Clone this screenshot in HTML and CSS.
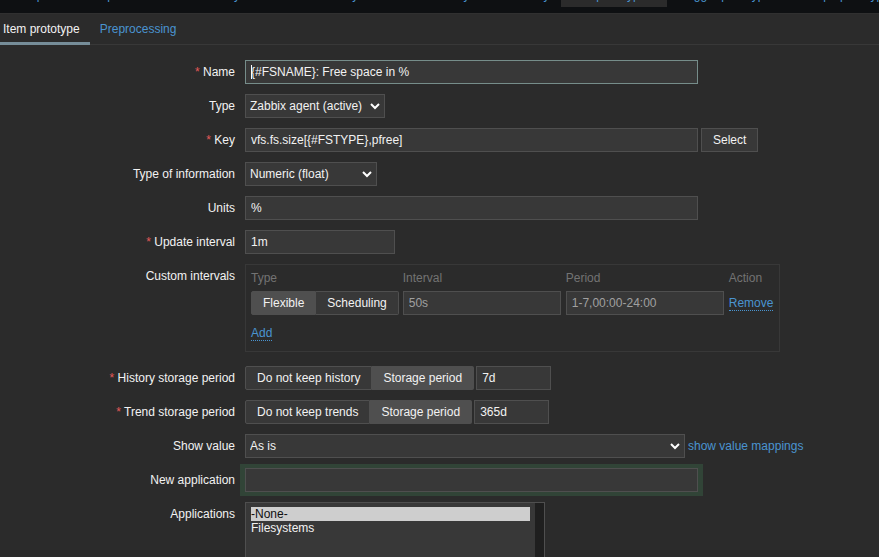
FILE: index.html
```
<!DOCTYPE html>
<html lang="en">
<head>
<meta charset="utf-8">
<title>Item prototype</title>
<link rel="stylesheet" href="styles.css">
</head>
<body>
<nav class="crumbs" aria-label="Discovery rule">
  <a href="#">All templates</a>
  <a href="#">Template Server Windows by Zabbix 4</a>
  <a href="#">Discovery list</a>
  <a href="#">Mounted filesystem discovery</a>
  <a href="#" class="current">Item prototypes 4</a>
  <a href="#">Trigger prototypes 2</a>
  <a href="#">Graph prototypes</a>
</nav>
<main>
  <nav class="tabs" aria-label="Form sections">
    <a href="#" class="tab active">Item prototype</a>
    <a href="#" class="tab">Preprocessing</a>
  </nav>
  <form class="form">
    <label class="label required" for="name">Name</label>
    <div class="field"><input class="wide focused" id="name" type="text" value="{#FSNAME}: Free space in %"><span class="caret"></span></div>

    <label class="label" for="type">Type</label>
    <div class="field"><select id="type" class="type"><option>Zabbix agent (active)</option></select></div>

    <label class="label required" for="key">Key</label>
    <div class="field"><input class="wide" id="key" type="text" value="vfs.fs.size[{#FSTYPE},pfree]"><button type="button" class="button">Select</button></div>

    <label class="label" for="info">Type of information</label>
    <div class="field"><select id="info" class="info"><option>Numeric (float)</option></select></div>

    <label class="label" for="units">Units</label>
    <div class="field"><input class="wide" id="units" type="text" value="%"></div>

    <label class="label required" for="update">Update interval</label>
    <div class="field"><input class="small" id="update" type="text" value="1m"></div>

    <span class="label">Custom intervals</span>
    <div class="field">
      <div class="intervals">
        <table>
          <thead><tr><th>Type</th><th>Interval</th><th>Period</th><th>Action</th></tr></thead>
          <tbody>
            <tr>
              <td><div class="segments">
                <input type="radio" name="kind" id="flexible" checked><label for="flexible">Flexible</label>
                <input type="radio" name="kind" id="scheduling"><label for="scheduling">Scheduling</label>
              </div></td>
              <td><input class="cell" type="text" placeholder="50s" aria-label="Interval"></td>
              <td><input class="cell" type="text" placeholder="1-7,00:00-24:00" aria-label="Period"></td>
              <td><button type="button" class="link">Remove</button></td>
            </tr>
            <tr><td colspan="4"><button type="button" class="link">Add</button></td></tr>
          </tbody>
        </table>
      </div>
    </div>

    <label class="label required" for="history">History storage period</label>
    <div class="field storage">
      <div class="segments">
        <input type="radio" name="hist" id="hist-off"><label for="hist-off">Do not keep history</label>
        <input type="radio" name="hist" id="hist-on" checked><label for="hist-on">Storage period</label>
      </div>
      <input class="tiny" id="history" type="text" value="7d">
    </div>

    <label class="label required" for="trend">Trend storage period</label>
    <div class="field storage">
      <div class="segments">
        <input type="radio" name="trends" id="trend-off"><label for="trend-off">Do not keep trends</label>
        <input type="radio" name="trends" id="trend-on" checked><label for="trend-on">Storage period</label>
      </div>
      <input class="tiny" id="trend" type="text" value="365d">
    </div>

    <label class="label" for="show">Show value</label>
    <div class="field"><select id="show" class="show"><option>As is</option></select><a href="#">show value mappings</a></div>

    <label class="label" for="new-app">New application</label>
    <div class="field"><input class="wide highlighted" id="new-app" type="text"></div>

    <label class="label" for="apps">Applications</label>
    <div class="field"><select id="apps" class="listbox" multiple size="6"><option selected>-None-</option><option>Filesystems</option></select></div>
  </form>
</main>
</body>
</html>
```
FILE: styles.css
```
* { box-sizing: border-box; }
body {
  margin: 0;
  background: #0e1012;
  color: #f2f2f2;
  font: 12px/14px "Liberation Sans", Arial, sans-serif;
}
a { color: #4a94d0; text-decoration: none; }
input, select, button { font: inherit; color: inherit; margin: 0; }

.crumbs {
  display: flex;
  align-items: flex-end;
  gap: 16px;
  height: 7px;
  margin-bottom: 6px;
  white-space: nowrap;
  overflow: hidden;
}
.crumbs a { padding: 5px 0; }
.crumbs .current { padding: 5px 5px 5px 9px; margin: 0 -3px 0 -5px; background: #2b2b2b; }

main { background: #2b2b2b; border-top: 1px solid #303030; min-height: 100vh; }
.tabs { display: flex; border-bottom: 1px solid #383838; height: 31px; }
.tab { padding: 8px 10px 6px; height: 31px; }
.tab.active {
  padding-left: 3px;
  color: #f2f2f2;
  border-bottom: 3px solid #768d99;
}

.form {
  display: grid;
  grid-template-columns: 235px 1fr;
  gap: 10px;
  padding-top: 15px;
}
.label { text-align: right; padding-top: 5px; }
.required::before { content: "* "; color: #e45959; }
.field { display: flex; align-items: center; gap: 3px; position: relative; }
.field.storage { gap: 2px; }

input[type="text"], select, .button {
  height: 24px;
  background: #383838;
  border: 1px solid #4f4f4f;
  border-radius: 0;
  outline: 0;
}
input[type="text"] { padding: 0 5px; }
input::placeholder { color: #a0a0a0; opacity: 1; }
.wide { width: 453px; }
.small { width: 150px; }
.tiny { width: 75px; }
.cell { width: 158px; display: block; }
input.focused { border-color: #768d8a; }
input.highlighted { box-shadow: 1px 0 0 4px #314437, -1px 0 0 4px #314437; }
.caret { position: absolute; left: 6px; top: 5px; width: 1px; height: 14px; background: #fff; }
.button { padding: 0 11px; }

select:not([multiple]) {
  appearance: none;
  padding: 0 20px 0 4px;
  background: #383838 url("data:image/svg+xml,%3Csvg xmlns='http://www.w3.org/2000/svg' width='10' height='7'%3E%3Cpath d='M1 1l4 4 4-4' fill='none' stroke='%23fff' stroke-width='2'/%3E%3C/svg%3E") no-repeat right 4px center;
}
.type { width: 140px; }
.info { width: 132px; }
.show { width: 440px; }

.intervals { border: 1px solid #383838; padding: 5px 5px 10px; margin-bottom: 4px; }
.intervals table { border-collapse: collapse; }
.intervals th { color: #737373; font-weight: 400; text-align: left; padding: 1px 5px 6px 0; }
.intervals td { padding: 0 5px 0 0; }
.intervals th:first-child, .intervals td:first-child { padding-right: 4px; }
.intervals th:last-child, .intervals td:last-child { padding-right: 1px; }
.intervals tr:last-child td { padding-top: 11px; }
.link {
  padding: 0;
  background: none;
  border: 0;
  border-bottom: 1px dotted #4a94d0;
  color: #4a94d0;
}

.segments { display: flex; position: relative; }
.segments input { position: absolute; opacity: 0; }
.segments label {
  height: 24px;
  padding: 4px 11px;
  background: #383838;
  border: 1px solid #4f4f4f;
  white-space: nowrap;
}
.segments label:first-of-type { border-radius: 2px 0 0 2px; }
.segments label:last-of-type { border-left: 0; border-radius: 0 2px 2px 0; }
.segments input:checked + label { background: #4f4f4f; }

select.listbox {
  width: 300px;
  height: 100px;
  padding: 4px 14px 4px 5px;
  overflow-y: scroll;
  background: linear-gradient(#1f1f1f, #1f1f1f) no-repeat right / 9px 100% #383838;
}
.listbox option { padding: 0; min-height: 14px; }
```
